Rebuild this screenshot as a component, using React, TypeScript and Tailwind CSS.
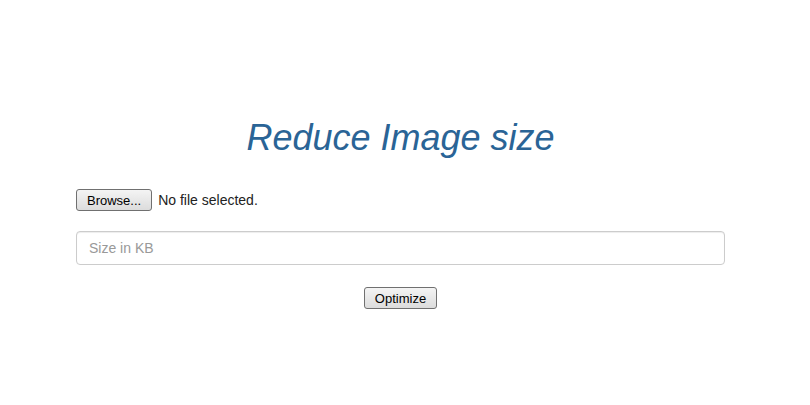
export default function App() {
  return (
    <div className="min-h-[405px] w-full bg-white font-['Liberation_Sans',Arial,sans-serif] text-[14px] text-[#333]">
      <div className="ml-[76px] w-[649px] pt-[118px]">
        <h1 className="text-center text-[36px] leading-[40px] font-normal italic text-[#2a6496]">
          Reduce Image size
        </h1>

        <div className="mt-[31px] flex items-center gap-[6px]">
          <button className="h-[22px] rounded-[3px] border border-[#707070] bg-gradient-to-b from-[#f4f4f4] to-[#dcdcdc] px-[10px] text-[13px] leading-none text-black">
            Browse...
          </button>
          <span className="text-[14px] text-[#222]">No file selected.</span>
        </div>

        <input
          type="text"
          placeholder="Size in KB"
          className="mt-[20px] block h-[34px] w-full rounded-[4px] border border-[#ccc] px-[12px] text-[14px] shadow-[inset_0_1px_1px_rgba(0,0,0,0.075)] outline-none placeholder:text-[#999]"
        />

        <div className="mt-[22px] flex justify-center">
          <button className="h-[22px] rounded-[3px] border border-[#707070] bg-gradient-to-b from-[#f4f4f4] to-[#dcdcdc] px-[10px] text-[13px] leading-none text-black">
            Optimize
          </button>
        </div>
      </div>
    </div>
  );
}
